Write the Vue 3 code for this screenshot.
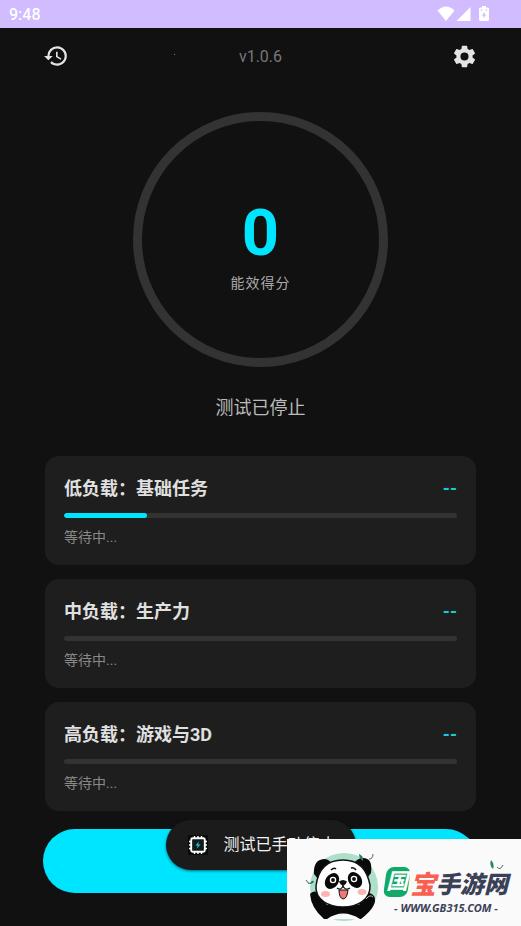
<script setup>
const tasks = [
  { title: '低负载：基础任务', score: '--', progress: 21, state: '等待中...' },
  { title: '中负载：生产力', score: '--', progress: 0, state: '等待中...' },
  { title: '高负载：游戏与3D', score: '--', progress: 0, state: '等待中...' }
]
</script>

<template>
  <div class="screen">
    <div class="statusbar">
      <span>9:48</span>
      <div class="signals">
        <svg width="18" height="16" viewBox="0 0 18 16" fill="#fff"><path d="M0.5 4.6Q9-3.6 17.500 4.600L9 15z" /></svg>
        <svg width="15" height="16" viewBox="0 0 15 16" fill="#fff"><path d="M0.500 15L14.500 1V15z" /></svg>
        <svg class="battery" width="10" height="16" viewBox="0 0 10 16">
          <path d="M3 0H7V1.500H8.500Q10 1.500 10 3V13.500Q10 15 8.500 15H1.500Q0 15 0 13.500V3Q0 1.500 1.500 1.500H3z" fill="#fff" />
          <path d="M5.600 5.500L3 9.400H4.600V12.400L7.200 8.400H5.600zM1.800 3.600H3.400V4.800H1.800zM6.600 3.600H8.200V4.800H6.600z" fill="#d0bcff" />
        </svg>
      </div>
    </div>

    <header class="header">
      <div class="left">
        <button class="icon" aria-label="历史记录">
          <svg width="26" height="26" viewBox="0 0 24 24" fill="#e4e4e4"><path d="M13 3a9 9 0 0 0-9 9H1l3.890 3.890.070.140L9 12H6a7 7 0 1 1 7 7 6.970 6.970 0 0 1-4.940-2.060l-1.420 1.420A9 9 0 1 0 13 3zm-1 5v5l4.280 2.540.720-1.210-3.500-2.080V8z" /></svg>
        </button>
        <i class="speck"></i>
      </div>
      <span class="version">v1.0.6</span>
      <div class="right">
        <button class="icon" aria-label="设置">
          <svg width="27" height="27" viewBox="0 0 24 24" fill="#e4e4e4"><path d="M19.140 12.940c.040-.300.060-.610.060-.940s-.020-.640-.070-.940l2.030-1.580a.490.490 0 0 0 .120-.610l-1.920-3.320a.488.488 0 0 0-.590-.220l-2.390.960c-.500-.380-1.030-.700-1.620-.940l-.360-2.540a.484.484 0 0 0-.480-.410h-3.840c-.240 0-.430.170-.470.410l-.360 2.540c-.590.240-1.130.570-1.620.940l-2.390-.960a.480.480 0 0 0-.590.220L2.740 8.870c-.120.210-.080.470.120.610l2.030 1.580c-.050.300-.090.630-.090.940s.020.640.070.940l-2.030 1.580a.490.490 0 0 0-.120.610l1.920 3.320c.120.220.370.290.590.220l2.390-.960c.500.380 1.030.700 1.620.940l.360 2.540c.050.240.240.410.480.410h3.840c.240 0 .440-.170.470-.410l.360-2.540c.590-.240 1.130-.560 1.620-.940l2.390.960c.220.080.470 0 .590-.220l1.920-3.320a.470.470 0 0 0-.120-.610zM12 15.600a3.600 3.600 0 1 1 0-7.200 3.600 3.600 0 0 1 0 7.200z" /></svg>
        </button>
      </div>
    </header>

    <main class="content">
      <section class="ring">
        <strong class="score">0</strong>
        <span class="score-label">能效得分</span>
      </section>
      <p class="status">测试已停止</p>

      <section class="cards">
        <article v-for="task in tasks" :key="task.title" class="card">
          <div class="card-head">
            <h2>{{ task.title }}</h2>
            <span class="value">{{ task.score }}</span>
          </div>
          <div class="track" role="progressbar" :aria-valuenow="task.progress" :aria-label="task.title">
            <div class="fill" :style="{ width: task.progress + '%' }"></div>
          </div>
          <p class="state">{{ task.state }}</p>
        </article>
      </section>

      <button class="start" aria-label="开始测试"></button>
    </main>

    <div class="toast" role="status">
      <svg width="20" height="20" viewBox="0 0 20 20">
        <rect width="20" height="20" fill="#0b0b0b" />
        <path d="M6.500 1V19M10 1V19M13.500 1V19M1 6.500H19M1 10H19M1 13.500H19" stroke="#fff" stroke-width="1.400" />
        <rect x="3.200" y="3.200" width="13.600" height="13.600" rx="1.500" fill="#111a1c" stroke="#fff" stroke-width="1.900" />
        <path d="M10.800 6.500L7.500 10.500H9.600L9 13.500L12.500 9.400H10.300z" fill="#20bfe0" />
      </svg>
      <span>测试已手动停止</span>
    </div>

    <a class="brand" href="#" aria-label="国宝手游网">
      <svg class="panda" width="96" height="87" viewBox="0 0 96 87">
        <circle cx="57" cy="48" r="34" fill="#addfc9" />
        <path d="M23 55Q27 50 32 55L40 66H72L77 57Q82 51 87 57Q92 66 74 80H37Q24 69 23 55z" fill="#090909" />
        <path d="M40 80Q56 69 73 80z" fill="#fafafa" />
        <path d="M27 35Q26 21 37 20Q42 20 45 25L31 40z" fill="#090909" />
        <path d="M84 34Q86 19 76 19Q71 19 67 24L81 38z" fill="#090909" />
        <path d="M56 21C73 21 80 31 83 46C84 61 70 68 56 68C42 68 28 61 29 47C31 31 39 21 56 21z" fill="#fff" stroke="#111" stroke-width="1.500" />
        <ellipse cx="45" cy="42" rx="6.500" ry="8.500" transform="rotate(35 45 42)" fill="#090909" />
        <ellipse cx="68" cy="41" rx="6.500" ry="8.500" transform="rotate(-35 68 41)" fill="#090909" />
        <circle cx="46" cy="41" r="2.600" fill="#111" stroke="#fff" stroke-width="1.300" />
        <circle cx="67" cy="40" r="2.600" fill="#111" stroke="#fff" stroke-width="1.300" />
        <path d="M52 42.500Q56 39.500 60 42.500Q59 46 56 47Q53 46 52 42.500z" fill="#111" />
        <path d="M50 49Q54 52 56 47Q58 52 63 49" fill="none" stroke="#111" stroke-width="1.300" />
        <path d="M52 51H61Q60 60 56 60Q52 59 52 51z" fill="#ef7776" stroke="#111" />
        <ellipse cx="38.500" cy="55" rx="4.500" ry="3" fill="#f9b5b3" />
        <ellipse cx="75" cy="53" rx="4.500" ry="3" fill="#f9b5b3" />
        <path d="M44 31Q47 28 49 30M64 29Q67 28 69 31" fill="none" stroke="#111" stroke-width="1.500" />
        <path d="M79 60Q83 55 86 58" fill="none" stroke="#fff" stroke-width="0.700" />
        <path d="M72 15Q77 17 76 22Q72 20 72 15zM21 43Q23 47 27 43Q26 40 23 44z" fill="#277e63" />
        <path d="M82 20Q86 20 86 15M19 41L22 45" fill="none" stroke="#47695f" />
      </svg>
      <span class="brand-text">
        <span class="brand-name"><b class="guo">国</b><b class="bao">宝</b><b>手游网</b></span>
        <span class="domain">- WWW.GB315.COM -</span>
      </span>
      <svg class="leaf" width="16" height="12" viewBox="0 0 16 12"><path d="M2 0Q6 4 4 9Q0 6 2 0z" fill="#238963" /><path d="M8 7Q11 11 14 5" fill="none" stroke="#476b60" /></svg>
    </a>
  </div>
</template>

<style>
body { margin: 0; background: #111; }
</style>

<style scoped>
.screen {
  position: relative;
  min-height: 100vh;
  background: #111;
  color: #e0e0e0;
  font-family: Roboto, "Noto Sans CJK SC", sans-serif;
}
h2, p { margin: 0; }
button { border: 0; padding: 0; cursor: pointer; }
svg { display: block; flex: none; }
.statusbar {
  display: flex;
  align-items: center;
  justify-content: space-between;
  height: 28px;
  padding: 0 32px 0 9px;
  background: #d0bcff;
  color: #fff;
  font-size: 16px;
  font-weight: 500;
}
.signals { display: flex; gap: 1px; }
.battery { margin-left: 7px; }
.header {
  display: grid;
  grid-template-columns: 1fr auto 1fr;
  align-items: center;
  height: 56px;
  padding: 0 43px;
}
.left { display: flex; align-items: center; }
.right { display: flex; justify-content: flex-end; }
.icon { width: 27px; background: none; }
.speck { width: 1px; height: 1px; margin: 0 0 3px 104px; background: #3f9f8f; }
.version { color: #777; font-size: 16px; }
.content {
  display: flex;
  flex-direction: column;
  padding: 28px 43px 33px;
}
.ring {
  display: flex;
  flex-direction: column;
  align-items: center;
  justify-content: center;
  align-self: center;
  box-sizing: border-box;
  width: 255px;
  height: 255px;
  padding-top: 10px;
  border: 9px solid #333;
  border-radius: 50%;
}
.score {
  color: #00e5ff;
  font-size: 65px;
  line-height: 76px;
}
.score-label {
  color: #aaa;
  font-size: 14px;
  line-height: 24px;
  letter-spacing: 1px;
}
.status {
  margin-top: 28px;
  color: #bbb;
  font-size: 18px;
  line-height: 26px;
  text-align: center;
}
.cards {
  display: flex;
  flex-direction: column;
  gap: 14px;
  margin: 35px 2px 18px;
}
.card {
  padding: 19px 19px 18px;
  border-radius: 14px;
  background: #1e1e1e;
}
.card-head {
  display: flex;
  align-items: center;
  justify-content: space-between;
  line-height: 28px;
}
h2 { font-size: 18px; font-weight: 700; }
.value { color: #20c6db; font-size: 18px; font-weight: 700; }
.track {
  height: 5px;
  margin: 10px 0 9px;
  overflow: hidden;
  border-radius: 3px;
  background: #333;
}
.fill { height: 100%; border-radius: 3px; background: #00e5ff; }
.state { color: #888; font-size: 14px; line-height: 20px; }
.start { height: 64px; border-radius: 32px; background: #00e5ff; }
.toast {
  position: absolute;
  bottom: 56px;
  left: 50%;
  display: flex;
  align-items: center;
  gap: 16px;
  height: 50px;
  padding: 0 20px 0 22px;
  border-radius: 25px;
  background: #1b1b1b;
  box-shadow: 0 1px 3px #0008;
  color: #f2f2f2;
  font-size: 16px;
  line-height: 24px;
  white-space: nowrap;
  transform: translateX(-50%);
}
.brand {
  position: absolute;
  right: 0;
  bottom: 0;
  display: flex;
  width: 234px;
  height: 87px;
  background: #fafafa;
  color: #3a4056;
  text-decoration: none;
}
.brand-text { padding: 25px 0 0 1px; font-style: italic; white-space: nowrap; }
.brand-name { display: flex; align-items: center; height: 36px; font-size: 24px; font-weight: 900; }
.guo {
  position: relative;
  z-index: 0;
  width: 26px;
  color: #fff;
  font-size: 22px;
  font-weight: 700;
  line-height: 30px;
  text-align: center;
}
.guo::before {
  content: "";
  position: absolute;
  inset: 0 1px;
  z-index: -1;
  border-radius: 7px;
  background: #12a867;
  transform: skewX(-8deg);
}
.bao { color: #fb5f52; font-size: 26px; }
.domain { display: block; padding-left: 10px; font: italic 700 11px/16px "Noto Sans", sans-serif; }
.leaf { position: absolute; top: 21px; right: 16px; }
</style>
